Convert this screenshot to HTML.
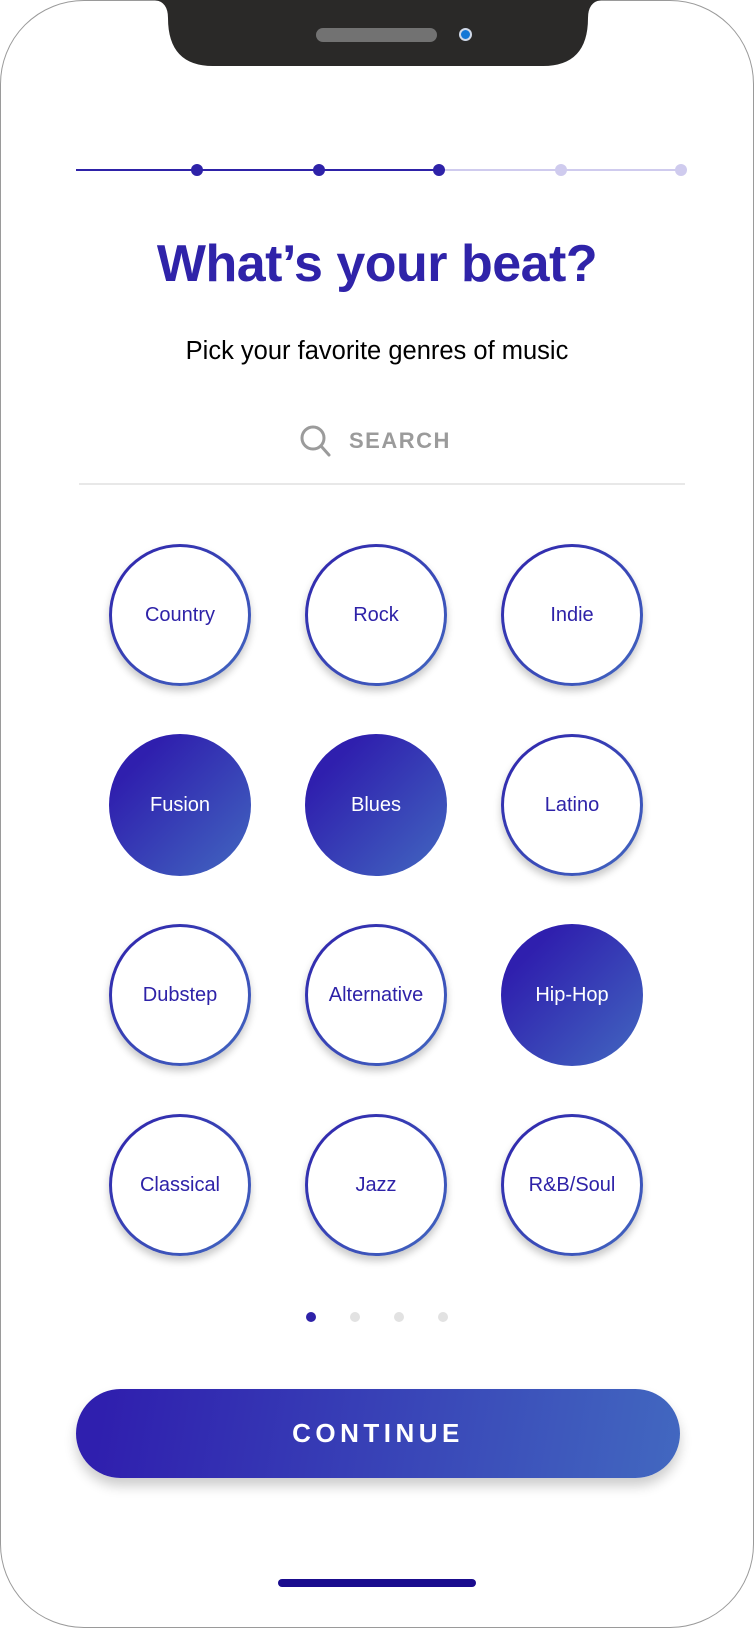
<!DOCTYPE html>
<html><head><meta charset="utf-8"><style>
*{margin:0;padding:0;box-sizing:border-box}
html,body{width:754px;height:1628px;background:#fff;overflow:hidden;font-family:"Liberation Sans",sans-serif}
.phone{position:absolute;left:0;top:0;width:754px;height:1628px;border:1.5px solid #9a9a9a;border-radius:84px;background:#fff}
.spk{position:absolute;left:316px;top:28px;width:121px;height:14px;border-radius:7px;background:#727272}
.cam{position:absolute;left:459px;top:28px;width:13px;height:13px;border-radius:50%;background:#1477d6;border:2px solid #cfd8e8}
.line{position:absolute;top:169px;height:2px}
.pd{position:absolute;top:164px;width:12px;height:12px;border-radius:50%}
h1{position:absolute;top:234px;left:0;width:754px;text-align:center;font-size:52px;font-weight:bold;color:#2f23a9;letter-spacing:-0.5px}
.sub{position:absolute;top:337px;left:0;width:754px;text-align:center;font-size:25.5px;color:#000}
.search{position:absolute;top:428px;left:349px;font-size:22px;font-weight:bold;color:#9b9b9b;letter-spacing:1.5px}
.div{position:absolute;top:483px;left:79px;width:606px;height:2px;background:#e8e8e8}
.c{position:absolute;width:142px;height:142px;border-radius:50%;display:flex;align-items:center;justify-content:center;font-size:20px;font-weight:500;color:#2e22a8;box-shadow:0 5px 8px rgba(0,0,0,.22)}
.o{background:linear-gradient(#fff,#fff) padding-box,linear-gradient(135deg,#2f22ac,#4268c0) border-box;border:3.5px solid transparent}
.f{background:linear-gradient(135deg,#2f1fae 20%,#4268c0);color:#fff;box-shadow:none}
.dot{position:absolute;top:1312px;width:10px;height:10px;border-radius:50%;background:#e2e2e2}
.btn{position:absolute;left:76px;top:1389px;width:604px;height:89px;border-radius:45px;background:linear-gradient(100deg,#2f1fae 5%,#4268c0);box-shadow:0 8px 12px rgba(0,0,0,.2);color:#fff;font-size:26px;font-weight:bold;letter-spacing:4.5px;display:flex;align-items:center;justify-content:center}
.home{position:absolute;left:278px;top:1579px;width:198px;height:8px;border-radius:4px;background:#1a0c8e}
</style></head><body>
<div class="phone"></div>
<svg style="position:absolute;left:155px;top:0" width="446" height="67" viewBox="0 0 446 67"><path d="M0 0 H446 Q433 2 433 18 Q433 66 388 66 H58 Q13 66 13 18 Q13 2 0 0 Z" fill="#2a2928"/></svg>
<div class="spk"></div><div class="cam"></div>
<div class="line" style="left:76px;width:363px;background:#2e22a8"></div>
<div class="line" style="left:439px;width:242px;background:#cfcbee"></div>
<div class="pd" style="left:191px;background:#2e22a8"></div>
<div class="pd" style="left:313px;background:#2e22a8"></div>
<div class="pd" style="left:433px;background:#2e22a8"></div>
<div class="pd" style="left:555px;background:#cfcbee"></div>
<div class="pd" style="left:675px;background:#cfcbee"></div>
<h1>What’s your beat?</h1>
<div class="sub">Pick your favorite genres of music</div>
<svg style="position:absolute;left:299px;top:424px" width="34" height="34" viewBox="0 0 34 34"><circle cx="14" cy="14" r="11" fill="none" stroke="#9b9b9b" stroke-width="3"/><line x1="22" y1="22" x2="30" y2="31" stroke="#9b9b9b" stroke-width="3" stroke-linecap="round"/></svg>
<div class="search">SEARCH</div>
<div class="div"></div>
<div class="c o" style="left:109px;top:544px">Country</div>
<div class="c o" style="left:305px;top:544px">Rock</div>
<div class="c o" style="left:501px;top:544px">Indie</div>
<div class="c f" style="left:109px;top:734px">Fusion</div>
<div class="c f" style="left:305px;top:734px">Blues</div>
<div class="c o" style="left:501px;top:734px">Latino</div>
<div class="c o" style="left:109px;top:924px">Dubstep</div>
<div class="c o" style="left:305px;top:924px">Alternative</div>
<div class="c f" style="left:501px;top:924px">Hip-Hop</div>
<div class="c o" style="left:109px;top:1114px">Classical</div>
<div class="c o" style="left:305px;top:1114px">Jazz</div>
<div class="c o" style="left:501px;top:1114px">R&amp;B/Soul</div>
<div class="dot" style="left:306px;background:#2e22a8"></div>
<div class="dot" style="left:350px"></div>
<div class="dot" style="left:394px"></div>
<div class="dot" style="left:438px"></div>
<div class="btn">CONTINUE</div>
<div class="home"></div>
</body></html>
